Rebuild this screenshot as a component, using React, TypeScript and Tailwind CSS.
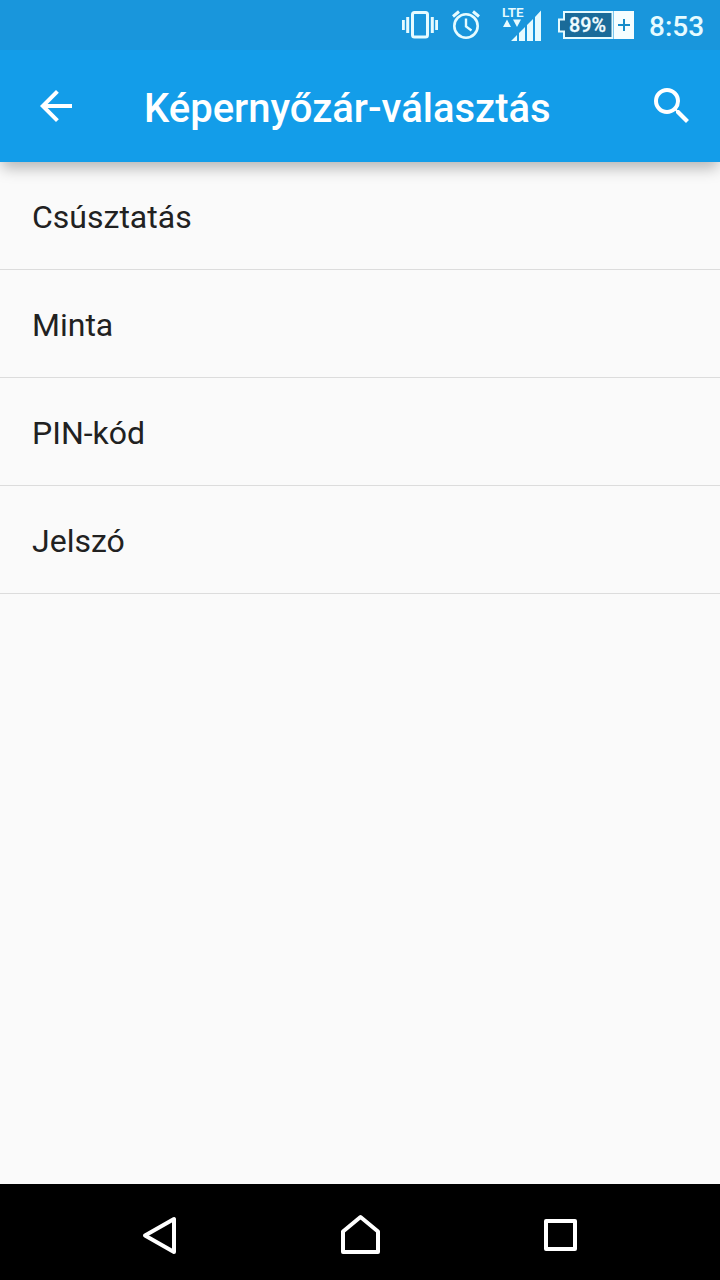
const options = ["Csúsztatás", "Minta", "PIN-kód", "Jelszó"];

function StatusBar() {
  return (
    <div className="z-20 flex h-[50px] shrink-0 items-start justify-end bg-[#1996dc] pr-4 text-[#e6fbff]">
      <svg className="h-[50px] w-9" viewBox="402 0 36 50" fill="currentColor">
        <rect x="412.5" y="12.5" width="15" height="24.5" rx="2" fill="none" stroke="currentColor" strokeWidth="3" />
        <path d="M402 20h2.8v10h-2.8zM406.2 17h3v16h-3zM430.800 17h3v16h-3zM435.2 20h2.8v10h-2.8z" />
      </svg>
      <svg className="ml-[13px] h-[50px] w-[30px]" viewBox="451 0 30 50" fill="none" stroke="currentColor">
        <circle cx="466" cy="26" r="11.7" strokeWidth="2.6" />
        <path d="M453 16.5l6-5M479 16.5l-6-5" strokeWidth="3" />
        <path d="M466 18.5v8l5.5 4" strokeWidth="2.4" />
      </svg>
      <svg className="ml-5 h-[50px] w-10" viewBox="501 0 40 50" fill="currentColor">
        <text x="502" y="17" fontSize="13.5" fontWeight="600" fontFamily="Roboto, sans-serif" textLength="21.5" lengthAdjust="spacing">LTE</text>
        <path d="M503 27l4-7.5 4 7.5zM513 19.5h8l-4 7.5z" />
        <path d="M511 41l6-6v6zM519 33l6-6v14h-6zM527 25l6-6v22h-6zM535 17l6-6.500v30.500h-6z" />
      </svg>
      <svg className="ml-[17px] h-[50px] w-[76px]" viewBox="558 0 76 50">
        <path d="M564 12h48.500v26H564v-6.500h-5v-12h5z" fill="#1a6b99" stroke="currentColor" strokeWidth="2" />
        <path d="M614 11h20v28h-20z" fill="#f6feff" />
        <path d="M624 19v12M618 25h12" stroke="#168dca" strokeWidth="2" />
        <text x="569" y="32" fontSize="21" fontWeight="500" fontFamily="Roboto, sans-serif" fill="#f0fcff" stroke="#f0fcff" strokeWidth="0.3" textLength="37" lengthAdjust="spacingAndGlyphs">89%</text>
      </svg>
      <span className="ml-[15px] mt-[10px] w-[55px] whitespace-nowrap text-[28px] font-medium leading-[33px]">8:53</span>
    </div>
  );
}

function AppBar() {
  return (
    <header className="z-10 flex h-28 shrink-0 items-center bg-[#139de9] px-8 text-white shadow-[0_8px_14px_-2px_rgba(0,0,0,0.28)]">
      <button aria-label="Vissza" className="h-12 w-12">
        <svg className="h-12 w-12" viewBox="0 0 24 24" fill="currentColor">
          <path d="M20 11H7.830l5.590-5.590L12 4l-8 8 8 8 1.410-1.410L7.830 13H20z" />
        </svg>
      </button>
      <h1 className="ml-16 mt-1.5 grow whitespace-nowrap text-[40px] font-medium leading-[48px]">Képernyőzár-választás</h1>
      <button aria-label="Keresés" className="-mr-2 h-12 w-12">
        <svg className="h-12 w-12" viewBox="0 0 24 24" fill="currentColor">
          <path d="M15.500 14h-.79l-.28-.27A6.471 6.471 0 0 0 16 9.500 6.500 6.500 0 1 0 9.500 16c1.610 0 3.090-.59 4.230-1.570l.27.28v.79l5 4.990L20.490 19l-4.990-5zm-6 0C7.010 14 5 11.990 5 9.500S7.010 5 9.500 5 14 7.010 14 9.500 11.990 14 9.500 14z" />
        </svg>
      </button>
    </header>
  );
}

function NavigationBar() {
  return (
    <nav className="flex h-24 shrink-0 items-center justify-between bg-black px-[130px] text-white">
      <svg className="h-[60px] w-[60px]" viewBox="130 1202 60 60" fill="none" stroke="currentColor" strokeWidth="4" strokeLinejoin="round">
        <path d="M145 1235.500l29-16.500v33z" />
      </svg>
      <svg className="h-[60px] w-[60px]" viewBox="330 1202 60 60" fill="none" stroke="currentColor" strokeWidth="4" strokeLinejoin="round">
        <path d="M343 1252v-20.500l17.500-14.500 17.500 14.500v20.500z" />
      </svg>
      <svg className="h-[60px] w-[60px]" viewBox="530 1202 60 60" fill="none" stroke="currentColor" strokeWidth="4" strokeLinejoin="round">
        <path d="M546 1221h29v28h-29z" />
      </svg>
    </nav>
  );
}

export default function App() {
  return (
    <div className="flex h-[1280px] w-[720px] flex-col overflow-hidden bg-[#fafafa] font-['Roboto',sans-serif]">
      <StatusBar />
      <AppBar />
      <ul className="grow">
        {options.map((option) => (
          <li key={option} className="flex h-[108px] items-center border-b border-[#dcdcdc] px-8 pt-[3px] text-[32px] leading-[38px] text-[#212121]">
            {option}
          </li>
        ))}
      </ul>
      <NavigationBar />
    </div>
  );
}
